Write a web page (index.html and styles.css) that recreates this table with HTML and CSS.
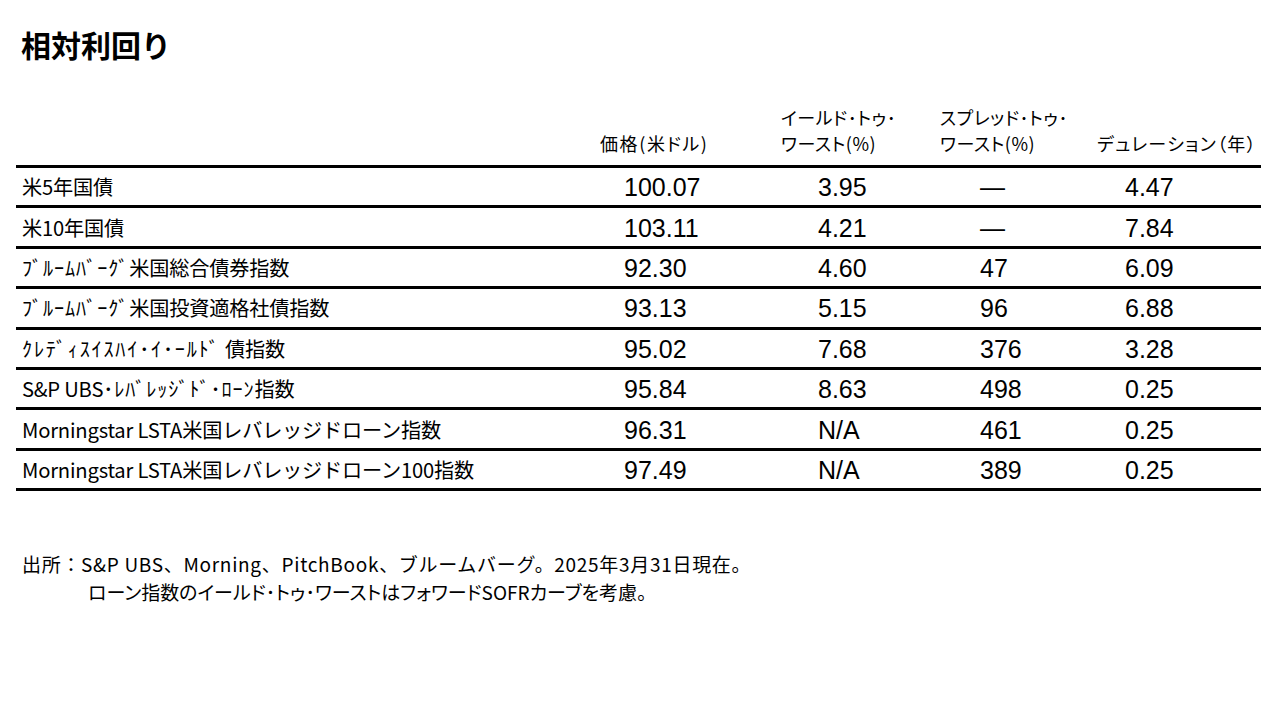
FILE: index.html
```html
<!DOCTYPE html>
<html lang="ja">
<head>
<meta charset="utf-8">
<title>相対利回り</title>
<link rel="stylesheet" href="styles.css">
</head>
<body>
<div class="page">
  <h1 class="title">相対利回り</h1>
  <div class="table">
    <div class="row head">
      <div class="cell lbl"></div>
      <div class="cell c1">価格(米ドル)</div>
      <div class="cell c2"><span class="hl">イールド･トゥ･</span><span class="hl">ワースト(%)</span></div>
      <div class="cell c3"><span class="hl">スプレッド･トゥ･</span><span class="hl">ワースト(%)</span></div>
      <div class="cell c4">デュレーション（年）</div>
    </div>
    <div class="row">
      <div class="cell lbl">米5年国債</div>
      <div class="cell c1 num">100.07</div>
      <div class="cell c2 num">3.95</div>
      <div class="cell c3 num">—</div>
      <div class="cell c4 num">4.47</div>
    </div>
    <div class="row">
      <div class="cell lbl">米10年国債</div>
      <div class="cell c1 num">103.11</div>
      <div class="cell c2 num">4.21</div>
      <div class="cell c3 num">—</div>
      <div class="cell c4 num">7.84</div>
    </div>
    <div class="row">
      <div class="cell lbl"><span class="hw">ﾌﾞﾙｰﾑﾊﾞｰｸﾞ</span>米国総合債券指数</div>
      <div class="cell c1 num">92.30</div>
      <div class="cell c2 num">4.60</div>
      <div class="cell c3 num">47</div>
      <div class="cell c4 num">6.09</div>
    </div>
    <div class="row">
      <div class="cell lbl"><span class="hw">ﾌﾞﾙｰﾑﾊﾞｰｸﾞ</span>米国投資適格社債指数</div>
      <div class="cell c1 num">93.13</div>
      <div class="cell c2 num">5.15</div>
      <div class="cell c3 num">96</div>
      <div class="cell c4 num">6.88</div>
    </div>
    <div class="row">
      <div class="cell lbl"><span class="hw wide">ｸﾚﾃﾞｨｽｲｽﾊｲ･ｲ･ｰﾙﾄﾞ</span> 債指数</div>
      <div class="cell c1 num">95.02</div>
      <div class="cell c2 num">7.68</div>
      <div class="cell c3 num">376</div>
      <div class="cell c4 num">3.28</div>
    </div>
    <div class="row">
      <div class="cell lbl">S&amp;P UBS<span class="hw">･ﾚﾊﾞﾚｯｼﾞﾄﾞ･ﾛｰﾝ</span>指数</div>
      <div class="cell c1 num">95.84</div>
      <div class="cell c2 num">8.63</div>
      <div class="cell c3 num">498</div>
      <div class="cell c4 num">0.25</div>
    </div>
    <div class="row">
      <div class="cell lbl">Morningstar LSTA米国レバレッジドローン指数</div>
      <div class="cell c1 num">96.31</div>
      <div class="cell c2 num">N/A</div>
      <div class="cell c3 num">461</div>
      <div class="cell c4 num">0.25</div>
    </div>
    <div class="row">
      <div class="cell lbl">Morningstar LSTA米国レバレッジドローン100指数</div>
      <div class="cell c1 num">97.49</div>
      <div class="cell c2 num">N/A</div>
      <div class="cell c3 num">389</div>
      <div class="cell c4 num">0.25</div>
    </div>
  </div>
  <div class="notes">
    <p class="note">出所：S&amp;P UBS、Morning、PitchBook、ブルームバーグ。2025年3月31日現在。</p>
    <p class="note indent">ローン指数のイールド･トゥ･ワーストはフォワードSOFRカーブを考慮。</p>
  </div>
</div>
</body>
</html>
```

FILE: styles.css
```css
html, body {
  margin: 0;
  padding: 0;
  background: #ffffff;
}
body {
  font-family: "Noto Sans CJK JP", "Noto Sans", sans-serif;
  color: #000000;
}
.page {
  width: 1280px;
  height: 720px;
  box-sizing: border-box;
}
.title {
  margin: 0;
  padding: 26px 0 0 21px;
  font-size: 30px;
  line-height: 36px;
  font-weight: 700;
  height: 36px;
}
.table {
  margin: 0 0 0 16px;
  width: 1245px;
  display: flex;
  flex-direction: column;
}
.row {
  display: grid;
  grid-template-columns: 584px 181px 159px 157px 164px;
  align-items: center;
  height: 40.4px;
  box-sizing: border-box;
  border-bottom: 3px solid #000;
}
.row.head {
  height: 106px;
  align-items: end;
  padding-bottom: 9px;
}
.head .cell {
  font-size: 18px;
  line-height: 26px;
  font-feature-settings: "palt";
  letter-spacing: 0.5px;
}
.head .c1 {
  letter-spacing: 1.6px;
}
.head .c4 {
  letter-spacing: 1.3px;
}
.head .c2, .head .c3 {
  display: flex;
  flex-direction: column;
}
.hl {
  display: block;
  height: 26px;
  line-height: 26px;
}
.cell {
  white-space: nowrap;
}
.lbl {
  padding-left: 6px;
  font-size: 20.2px;
  letter-spacing: -0.2px;
}
.hw {
  letter-spacing: 0.9px;
}
.hw.wide {
  letter-spacing: 1.8px;
}
.num {
  font-family: "Liberation Sans", Arial, sans-serif;
  font-size: 25px;
  padding-top: 2px;
}
.c1.num { padding-left: 24px; }
.c2.num { padding-left: 37px; }
.c3.num { padding-left: 40px; }
.c4.num { padding-left: 28px; }
.notes {
  margin-top: 59px;
  padding-left: 22px;
}
.note {
  margin: 0;
  font-size: 19px;
  line-height: 27.5px;
  letter-spacing: 0.7px;
}
.note.indent {
  padding-left: 66px;
  font-feature-settings: "palt";
  letter-spacing: 0;
}
```
